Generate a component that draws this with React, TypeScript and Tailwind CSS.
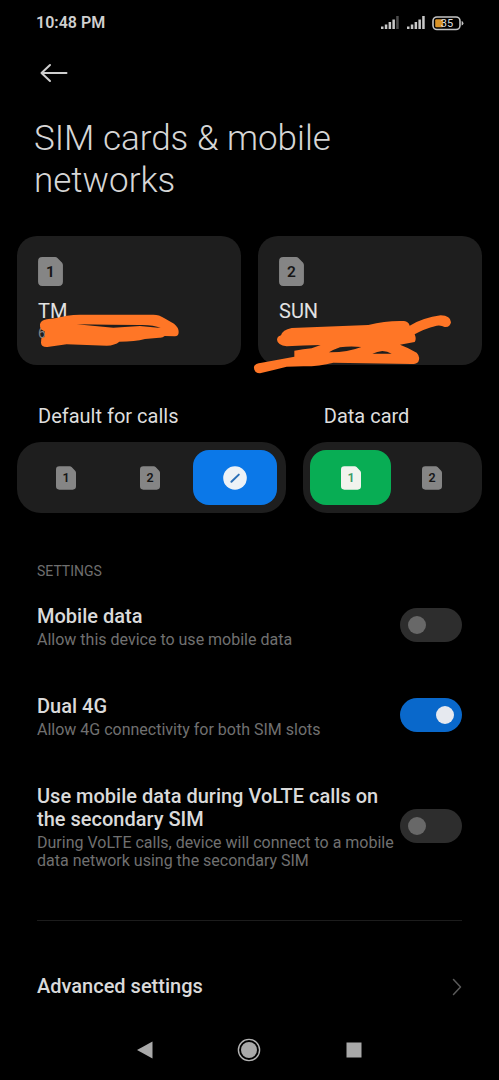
import { useState } from "react";

type SimTone = "muted" | "active";

function SimIcon({ slot, tone = "muted", large = false }: { slot: number; tone?: SimTone; large?: boolean }) {
  const fill = tone === "active" ? "#f1f3ee" : "#858585";
  const ink = tone === "active" ? "#3a9a68" : "#161616";
  return (
    <svg
      viewBox="0 0 24 28"
      className={large ? "h-[29px] w-[25px]" : "h-6 w-5"}
      aria-hidden="true"
    >
      <path d="M4 0H16.5Q17.8 0 18.7 .9L23 5.4Q24 6.4 24 7.8V24Q24 28 20 28H4Q0 28 0 24V4Q0 0 4 0Z" fill={fill} />
      <text
        x="12"
        y="19.2"
        textAnchor="middle"
        fontSize="15"
        fontWeight="600"
        fontFamily="Roboto, sans-serif"
        fill={ink}
      >
        {slot}
      </text>
    </svg>
  );
}

function AskIcon() {
  return (
    <svg viewBox="0 0 24 24" className="size-6" aria-hidden="true">
      <circle cx="12" cy="12" r="11.8" fill="#edf2f7" />
      <path d="M8.4 15.8L15.8 8.6" stroke="#2a6fb8" strokeWidth="2" strokeLinecap="round" />
    </svg>
  );
}

function Signal({ weak = false }: { weak?: boolean }) {
  return (
    <svg viewBox="0 0 20 14" className="h-[14px] w-5" fill="#c8c8c8" aria-hidden="true">
      <rect x="1" y="10.5" width="2.5" height="2.5" />
      <rect x="4.8" y="8.5" width="2.5" height="4.5" />
      <rect x="8.6" y="6" width="2.5" height="7" />
      <rect x="12.4" y="3.5" width="2.5" height="9.5" />
      <rect x="16.2" y="0" width="2.5" height="13" fill={weak ? "#4c4c4c" : "#c8c8c8"} />
    </svg>
  );
}

function Battery() {
  return (
    <svg viewBox="0 0 32 15" className="h-[15px] w-8" aria-label="Battery 35%">
      <rect x="1" y="1" width="27" height="12.5" rx="4" fill="none" stroke="#c4c4c4" strokeWidth="1.6" />
      <path d="M29.6 5Q31.4 5.6 31.4 7.3T29.6 9.6Z" fill="#c4c4c4" />
      <rect x="3.2" y="3.2" width="8" height="8" rx="1.2" fill="#d99327" />
      <text x="15" y="11.2" textAnchor="middle" fontSize="11" fontFamily="Roboto, sans-serif" fill="#dedede">
        35
      </text>
    </svg>
  );
}

type Scribble = { viewBox: string; path: string };

const scribbleOne: Scribble = {
  viewBox: "-39 -162 672 387",
  path: "M30 103Q32 91 50 88L75 85Q110 75 150 74H370Q388 74 402 84L432 101Q446 112 446 126Q446 140 433 139L404 138Q398 144 388 143L345 147Q315 155 268 155Q255 166 230 167L110 163L52 171Q34 172 33 158L34 145L44 141L45 125L33 118Q29 112 30 103ZM140 103L250 113L330 108L392 114Q370 104 330 105L240 104Z",
};

const scribbleTwo: Scribble = {
  viewBox: "24 -207 672 387",
  path: "M81 104Q82 94 93 91Q97 75 125 69L355 60Q410 46 462 48Q476 50 479 62Q520 38 572 31Q602 32 603 52Q600 68 584 66Q574 60 560 62Q520 72 494 88Q500 103 494 111L450 119Q475 128 500 143Q512 155 505 170Q500 177 485 177L250 173Q210 184 160 184L110 185Q70 195 30 205Q10 203 12 185Q15 175 35 173L133 155V137Q160 132 185 130L212 120Q160 121 110 124Q82 120 81 104ZM237 142Q290 143 334 126Q300 122 270 127Q250 134 237 142ZM367 146H425Q412 139 397 138Q382 140 367 146Z",
};

function SimCard({ slot, name, mark, covered }: { slot: number; name: string; mark: Scribble; covered?: string }) {
  return (
    <button
      type="button"
      className="relative flex h-[129px] flex-col items-start rounded-[20px] bg-[#1e1e1e] px-[21px] pt-[21px] text-left"
    >
      <SimIcon slot={slot} large />
      <span className="mt-[13px] text-[20px] leading-6 text-[#e2e2e2]">{name}</span>
      {covered && <span className="text-[14px] leading-5 text-[#858585]">{covered}</span>}
      <svg
        viewBox={mark.viewBox}
        className="absolute top-0 left-0 h-[129px] w-[224px] overflow-visible"
        aria-hidden="true"
      >
        <path d={mark.path} fill="#ff7626" fillRule="evenodd" />
      </svg>
    </button>
  );
}

type Option = { value: string; label: string; slot?: number };

function Segmented({
  title,
  name,
  options,
  initial,
  color,
}: {
  title: string;
  name: string;
  options: Option[];
  initial: string;
  color: string;
}) {
  const [value, setValue] = useState(initial);
  return (
    <fieldset className="min-w-0">
      <legend className="px-[21px] text-[20px] leading-6 text-[#dedede]">{title}</legend>
      <div className="mt-[14px] flex rounded-[24px] bg-[#1e1e1e] py-2 pr-[9px] pl-[7px]">
        {options.map((o) => {
          const on = o.value === value;
          return (
            <label
              key={o.value}
              className={`relative flex h-[55px] flex-1 cursor-pointer items-center justify-center rounded-[16px] ${on ? color : ""}`}
            >
              <input
                type="radio"
                name={name}
                aria-label={o.label}
                checked={on}
                onChange={() => setValue(o.value)}
                className="sr-only"
              />
              {o.slot ? <SimIcon slot={o.slot} tone={on ? "active" : "muted"} /> : <AskIcon />}
            </label>
          );
        })}
      </div>
    </fieldset>
  );
}

function SettingRow({ id, title, detail, initial }: { id: string; title: string; detail: string; initial: boolean }) {
  const [on, setOn] = useState(initial);
  return (
    <div className="flex items-center justify-between gap-1">
      <label htmlFor={id} className="min-w-0 flex-1">
        <span className="block text-[20px] leading-[23px] font-medium text-[#dadada]">{title}</span>
        <span className="mt-[3px] block text-[16px] leading-[18px] text-[#707070]">{detail}</span>
      </label>
      <input
        id={id}
        type="checkbox"
        role="switch"
        checked={on}
        onChange={() => setOn(!on)}
        className="mb-1 flex h-[34px] w-[62px] shrink-0 cursor-pointer appearance-none items-center rounded-full bg-[#2d2d2d] px-2 before:size-[18px] before:rounded-full before:bg-[#686868] before:content-[''] checked:justify-end checked:bg-[#0968cb] checked:before:bg-[#e6e9ef]"
      />
    </div>
  );
}

export default function App() {
  return (
    <div className="flex min-h-screen flex-col bg-black font-['Roboto',sans-serif] text-[#dadada]">
      <div className="flex h-[46px] items-center justify-between pr-[35px] pl-9">
        <span className="text-[16px] leading-5 font-semibold text-[#cfcfcf]">10:48 PM</span>
        <div className="flex items-center gap-[6px]">
          <Signal weak />
          <Signal />
          <Battery />
        </div>
      </div>

      <header className="px-[34px]">
        <button type="button" aria-label="Back" className="flex h-[54px] items-center pl-[6px]">
          <svg viewBox="0 0 28 20" className="h-5 w-7" fill="none" stroke="#cfcfcf" strokeWidth="2" strokeLinecap="round" strokeLinejoin="round" aria-hidden="true">
            <path d="M26.5 10H1.5M10 2L1.5 10L10 18" />
          </svg>
        </button>
        <h1 className="mt-[18px] text-[35px] leading-[42px] font-light text-[#d6d6d6]">SIM cards &amp; mobile networks</h1>
      </header>

      <main className="flex flex-1 flex-col">
        <div className="mt-[34px] grid grid-cols-2 gap-[17px] px-[17px]">
          <SimCard slot={1} name="TM" mark={scribbleOne} covered="6" />
          <SimCard slot={2} name="SUN" mark={scribbleTwo} />
        </div>

        <div className="mt-[39px] grid grid-cols-[3fr_2fr] gap-[17px] px-[17px]">
          <Segmented
            title="Default for calls"
            name="calls"
            initial="ask"
            color="bg-[#0b78e8]"
            options={[
              { value: "1", label: "SIM 1", slot: 1 },
              { value: "2", label: "SIM 2", slot: 2 },
              { value: "ask", label: "Not set" },
            ]}
          />
          <Segmented
            title="Data card"
            name="data"
            initial="1"
            color="bg-[#08ad54]"
            options={[
              { value: "1", label: "SIM 1", slot: 1 },
              { value: "2", label: "SIM 2", slot: 2 },
            ]}
          />
        </div>

        <section className="mt-12 px-[37px]">
          <h2 className="text-[14px] leading-5 text-[#6e6e6e]">SETTINGS</h2>
          <div className="mt-6 flex flex-col gap-[46px]">
            <SettingRow id="mobile-data" title="Mobile data" detail="Allow this device to use mobile data" initial={false} />
            <SettingRow id="dual-4g" title="Dual 4G" detail="Allow 4G connectivity for both SIM slots" initial />
            <SettingRow
              id="volte-data"
              title="Use mobile data during VoLTE calls on the secondary SIM"
              detail="During VoLTE calls, device will connect to a mobile data network using the secondary SIM"
              initial={false}
            />
          </div>
          <hr className="mt-[50px] border-[#1c1c1c]" />
          <a href="#advanced" className="mt-[54px] flex items-center justify-between">
            <span className="text-[20px] leading-[23px] font-medium">Advanced settings</span>
            <svg viewBox="0 0 10 18" className="h-[18px] w-[10px]" fill="none" stroke="#5a5a5a" strokeWidth="1.5" strokeLinecap="round" strokeLinejoin="round" aria-hidden="true">
              <path d="M1.5 1.5L8.5 9L1.5 16.5" />
            </svg>
          </a>
        </section>
      </main>

      <nav className="grid h-[60px] grid-cols-3 place-items-center px-[93px]" aria-label="System">
        <button type="button" aria-label="Back">
          <svg viewBox="0 0 24 24" className="size-6" fill="#a9a9a9" aria-hidden="true">
            <path d="M4 12L19.5 3.5V20.5Z" />
          </svg>
        </button>
        <button type="button" aria-label="Home">
          <svg viewBox="0 0 24 24" className="size-6" aria-hidden="true">
            <circle cx="12" cy="12" r="10.6" fill="none" stroke="#b4b4b4" strokeWidth="1.4" />
            <circle cx="12" cy="12" r="8" fill="#a9a9a9" />
          </svg>
        </button>
        <button type="button" aria-label="Recent apps">
          <svg viewBox="0 0 24 24" className="size-6" fill="#a9a9a9" aria-hidden="true">
            <rect x="4.5" y="4.5" width="15" height="15" />
          </svg>
        </button>
      </nav>
    </div>
  );
}
